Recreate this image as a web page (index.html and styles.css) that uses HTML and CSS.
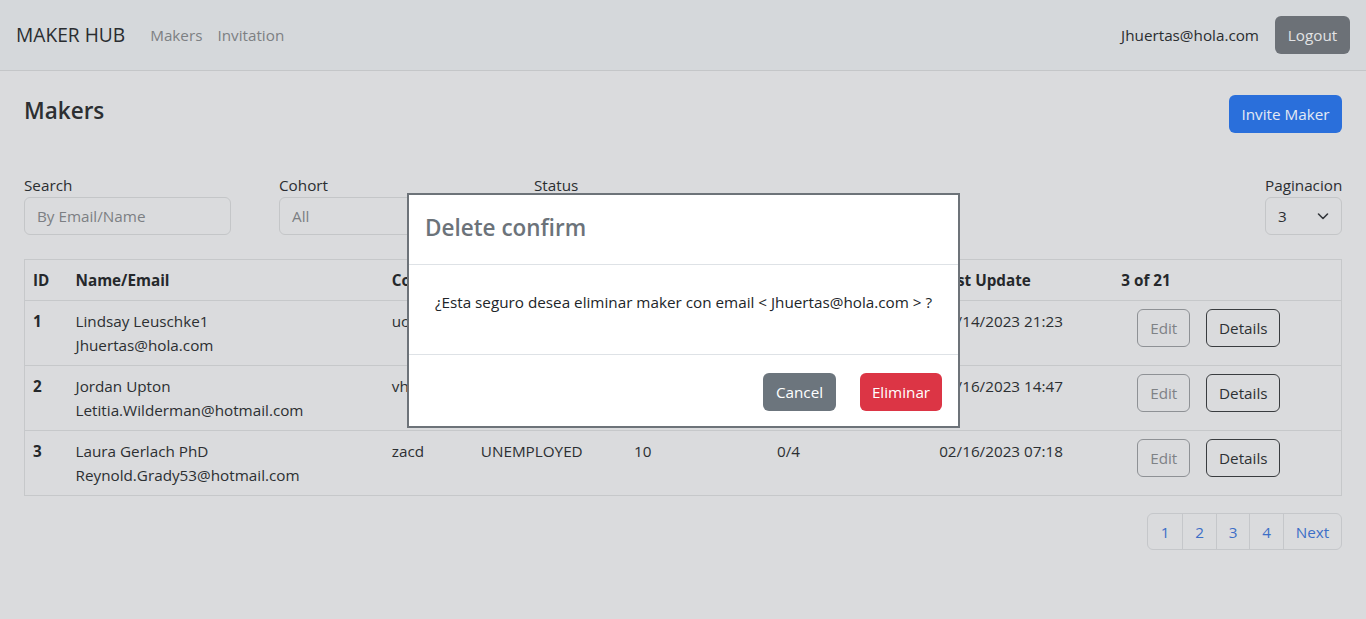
FILE: index.html
```html
<!DOCTYPE html>
<html lang="es">
<head>
<meta charset="utf-8">
<title>Maker Hub</title>
<link rel="stylesheet" href="styles.css">
</head>
<body>
<nav class="navbar">
  <div class="nav-left">
    <span class="brand">MAKER HUB</span>
    <a class="nav-link">Makers</a>
    <a class="nav-link">Invitation</a>
  </div>
  <div class="nav-right">
    <span class="user">Jhuertas@hola.com</span>
    <button class="btn btn-logout">Logout</button>
  </div>
</nav>

<main class="content">
  <div class="page-head">
    <h3 class="title">Makers</h3>
    <button class="btn btn-primary">Invite Maker</button>
  </div>

  <div class="filters">
    <div class="field">
      <label class="label">Search</label>
      <div class="control placeholder">By Email/Name</div>
    </div>
    <div class="field">
      <label class="label">Cohort</label>
      <div class="control select placeholder"><span>All</span>
        <svg class="chev" viewBox="0 0 16 16" width="16" height="16"><polyline points="3.5,6 8,10.5 12.5,6" fill="none" stroke="#33373b" stroke-width="1.6" stroke-linecap="round" stroke-linejoin="round"/></svg>
      </div>
    </div>
    <div class="field">
      <label class="label">Status</label>
      <div class="control select placeholder"><span>All</span>
        <svg class="chev" viewBox="0 0 16 16" width="16" height="16"><polyline points="3.5,6 8,10.5 12.5,6" fill="none" stroke="#33373b" stroke-width="1.6" stroke-linecap="round" stroke-linejoin="round"/></svg>
      </div>
    </div>
    <div class="field field-right">
      <label class="label">Paginacion</label>
      <div class="control select small"><span>3</span>
        <svg class="chev" viewBox="0 0 16 16" width="16" height="16"><polyline points="3.5,6 8,10.5 12.5,6" fill="none" stroke="#33373b" stroke-width="1.6" stroke-linecap="round" stroke-linejoin="round"/></svg>
      </div>
    </div>
  </div>

  <table class="table">
    <colgroup>
      <col class="c-id"><col class="c-name"><col class="c-cohort"><col class="c-status">
      <col class="c-level"><col class="c-progress"><col class="c-update"><col class="c-actions">
    </colgroup>
    <thead>
      <tr>
        <th>ID</th><th>Name/Email</th><th>Cohort</th><th>Status</th>
        <th>Level</th><th>Progress</th><th>Last Update</th><th>3 of 21</th>
      </tr>
    </thead>
    <tbody>
      <tr>
        <td class="bold">1</td>
        <td>Lindsay Leuschke1<br>Jhuertas@hola.com</td>
        <td>ucfa</td><td>EMPLOYED</td><td>8</td><td>1/4</td>
        <td>02/14/2023 21:23</td>
        <td class="actions"><button class="btn btn-edit">Edit</button><button class="btn btn-details">Details</button></td>
      </tr>
      <tr>
        <td class="bold">2</td>
        <td>Jordan Upton<br>Letitia.Wilderman@hotmail.com</td>
        <td>vhbe</td><td>EMPLOYED</td><td>4</td><td>2/4</td>
        <td>02/16/2023 14:47</td>
        <td class="actions"><button class="btn btn-edit">Edit</button><button class="btn btn-details">Details</button></td>
      </tr>
      <tr>
        <td class="bold">3</td>
        <td>Laura Gerlach PhD<br>Reynold.Grady53@hotmail.com</td>
        <td>zacd</td><td>UNEMPLOYED</td><td>10</td><td>0/4</td>
        <td>02/16/2023 07:18</td>
        <td class="actions"><button class="btn btn-edit">Edit</button><button class="btn btn-details">Details</button></td>
      </tr>
    </tbody>
  </table>

  <div class="pager-row">
    <ul class="pager">
      <li class="page w34">1</li>
      <li class="page w34">2</li>
      <li class="page w33">3</li>
      <li class="page w34">4</li>
      <li class="page next">Next</li>
    </ul>
  </div>
</main>

<div class="modal-layer">
  <div class="modal">
    <div class="modal-header">Delete confirm</div>
    <div class="modal-body">¿Esta seguro desea eliminar maker con email &lt; Jhuertas@hola.com &gt; ?</div>
    <div class="modal-footer">
      <button class="btn btn-cancel">Cancel</button>
      <button class="btn btn-danger">Eliminar</button>
    </div>
  </div>
</div>
</body>
</html>
```

FILE: styles.css
```css
* { box-sizing: border-box; }

html, body {
  margin: 0;
  padding: 0;
  height: 100%;
}

body {
  background: #dadbdd;
  font-family: "Open Sans", "Noto Sans", sans-serif;
  font-size: 15.25px;
  line-height: 24px;
  color: #27292c;
  overflow: hidden;
}

/* navbar */
.navbar {
  height: 71px;
  background: #d5d8db;
  border-bottom: 1px solid #c4c6c8;
  display: flex;
  align-items: center;
  justify-content: space-between;
  padding: 0 16px;
}
.nav-left, .nav-right { display: flex; align-items: center; }
.brand {
  font-size: 19.2px;
  color: #2a2d30;
  margin-right: 25px;
}
.nav-link {
  color: #7d8083;
  margin-right: 15px;
}
.user {
  color: #2a2d30;
  margin-right: 16px;
}

/* buttons */
.btn {
  font-family: inherit;
  font-size: 15.25px;
  line-height: 24px;
  padding: 6px 12px;
  border: 1px solid transparent;
  border-radius: 6px;
  background: transparent;
  cursor: pointer;
}
.btn-logout {
  background: #6c7177;
  color: #e2e3e4;
  width: 75px;
  height: 38px;
  padding: 0;
}
.btn-primary {
  background: #2a6fdb;
  color: #e4eaf4;
  width: 113px;
  height: 38px;
  padding: 0;
}

/* page */
.content {
  padding: 0 24px;
}
.page-head {
  display: flex;
  justify-content: space-between;
  align-items: flex-start;
  padding-top: 24px;
}
.title {
  margin: 0;
  font-size: 22.5px;
  font-weight: 600;
  line-height: 32px;
  color: #2c2f32;
}

.filters {
  display: flex;
  gap: 48px;
  margin-top: 40px;
}
.field { display: flex; flex-direction: column; width: 207px; }
.field-right { margin-left: auto; width: 77px; }
.label { color: #2b2e31; }
.control {
  height: 38px;
  border: 1px solid #c4c6c8;
  border-radius: 6px;
  padding: 6px 12px;
  display: flex;
  align-items: center;
  justify-content: space-between;
}
.placeholder { color: #7c7f83; }
.small { color: #2b2e31; }
.chev { margin-right: -2px; }

/* table */
.table {
  width: 100%;
  margin-top: 24px;
  border-collapse: collapse;
  table-layout: fixed;
  border: 1px solid #c6c8ca;
}
.c-id { width: 43px; }
.c-name { width: 316px; }
.c-cohort { width: 89px; }
.c-status { width: 153px; }
.c-level { width: 143px; }
.c-progress { width: 162px; }
.c-update { width: 182px; }
.c-actions { width: 228px; }

.table th, .table td {
  padding: 8px;
  text-align: left;
  vertical-align: top;
  border-bottom: 1px solid #c6c8ca;
  white-space: nowrap;
}
.table th {
  font-weight: 700;
  color: #25282b;
}
.table td { color: #2c2f32; }
.table td.bold { font-weight: 700; color: #25282b; }
.table tbody tr { height: 65px; }

.actions { padding-top: 8px !important; }
.actions .btn { margin-left: 16px; height: 38px; padding: 0; }
.btn-edit {
  width: 53px;
  border-color: #8e9195;
  color: #7f8286;
}
.btn-details {
  width: 74px;
  border-color: #393c3f;
  color: #2e3134;
}

/* pagination */
.pager-row {
  display: flex;
  justify-content: flex-end;
  margin-top: 17px;
}
.pager {
  list-style: none;
  margin: 0;
  padding: 0;
  display: flex;
  border: 1px solid #c5c7ca;
  border-radius: 6px;
}
.page {
  height: 35px;
  display: flex;
  align-items: center;
  justify-content: center;
  color: #3d6fc7;
  border-left: 1px solid #c5c7ca;
}
.page:first-child { border-left: none; }
.w34 { width: 34px; }
.w33 { width: 33px; }
.next { width: 58px; }

/* modal */
.modal-layer {
  position: fixed;
  inset: 0;
  display: flex;
  justify-content: center;
  align-items: flex-start;
  padding-top: 193px;
  padding-left: 1px;
}
.modal {
  width: 553px;
  background: #ffffff;
  border: 2px solid #6d7379;
}
.modal-header {
  padding: 15px 16px 18px;
  font-size: 22.5px;
  font-weight: 600;
  line-height: 36px;
  color: #6c737a;
  border-bottom: 1px solid #dee2e6;
}
.modal-body {
  padding: 25px 16px 40px;
  text-align: center;
  color: #212529;
  border-bottom: 1px solid #dee2e6;
}
.modal-footer {
  display: flex;
  justify-content: flex-end;
  gap: 24px;
  padding: 18px 16px 15px;
}
.btn-cancel {
  background: #6c757d;
  color: #ffffff;
  width: 73px;
  height: 38px;
  padding: 0;
}
.btn-danger {
  background: #dc3545;
  color: #ffffff;
  width: 82px;
  height: 38px;
  padding: 0;
}
```
